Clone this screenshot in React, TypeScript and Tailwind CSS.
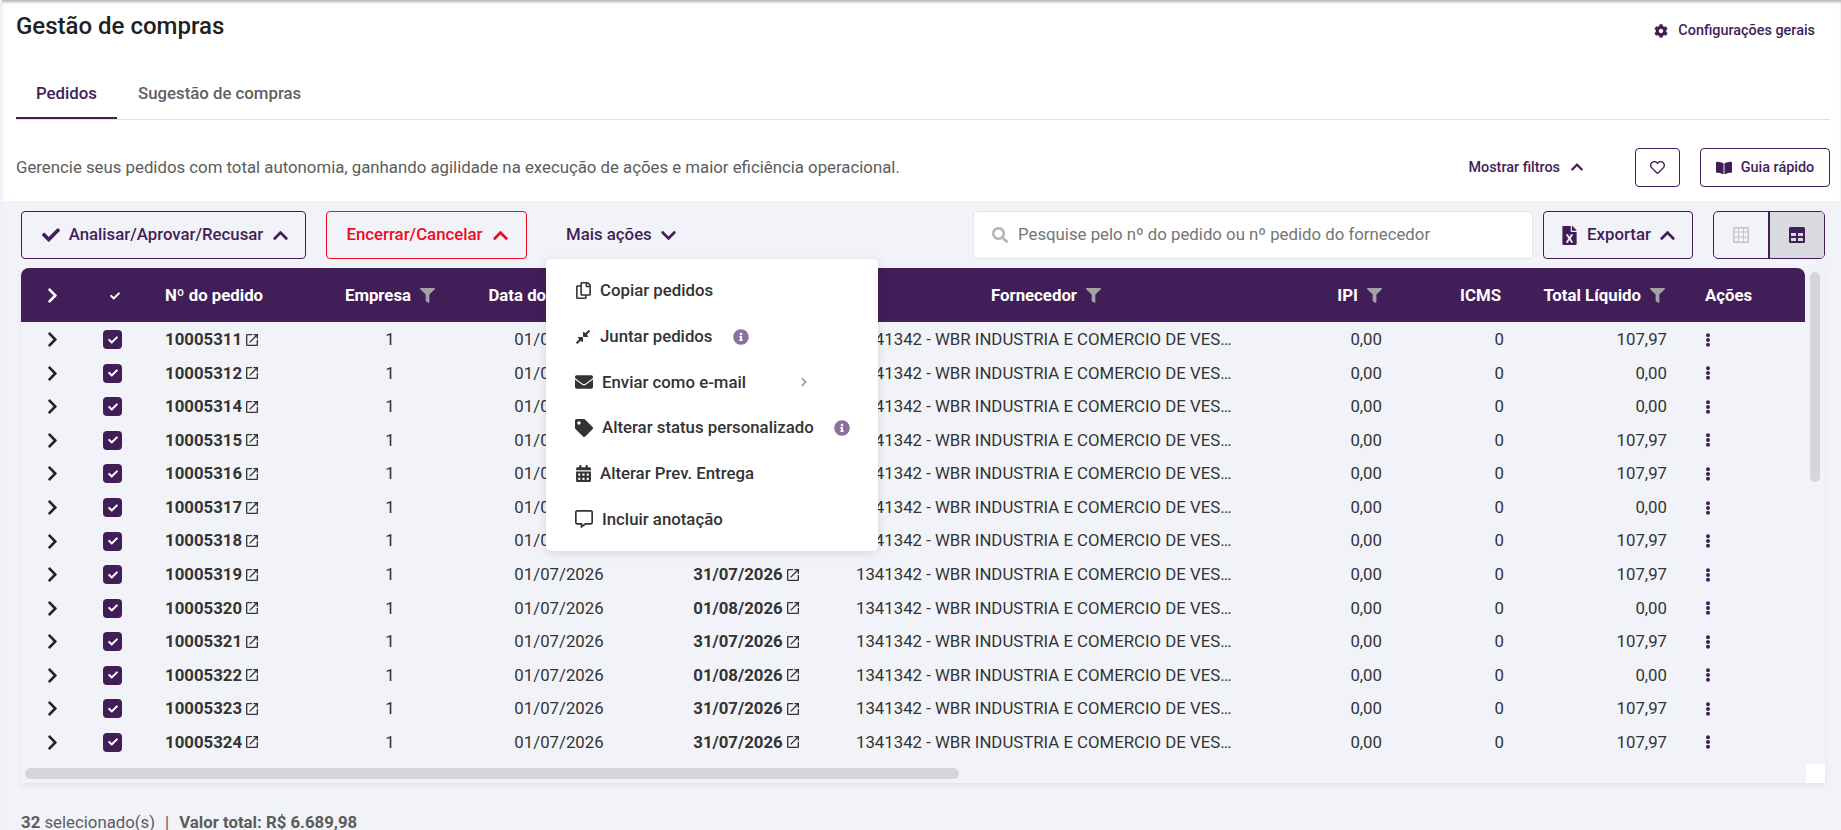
import type { ReactNode } from "react";
import {
  FaBookOpen,
  FaCalendarAlt,
  FaCheck,
  FaChevronDown,
  FaChevronRight,
  FaChevronUp,
  FaCog,
  FaCompressAlt,
  FaEllipsisV,
  FaEnvelope,
  FaFileExcel,
  FaFilter,
  FaInfoCircle,
  FaRegCommentAlt,
  FaRegCopy,
  FaRegHeart,
  FaSearch,
  FaTag,
} from "react-icons/fa";
import { MdOpenInNew } from "react-icons/md";

const rows = [
  { id: "10005311", prev: "31/07/2026", total: "107,97" },
  { id: "10005312", prev: "01/08/2026", total: "0,00" },
  { id: "10005314", prev: "01/08/2026", total: "0,00" },
  { id: "10005315", prev: "31/07/2026", total: "107,97" },
  { id: "10005316", prev: "31/07/2026", total: "107,97" },
  { id: "10005317", prev: "01/08/2026", total: "0,00" },
  { id: "10005318", prev: "31/07/2026", total: "107,97" },
  { id: "10005319", prev: "31/07/2026", total: "107,97" },
  { id: "10005320", prev: "01/08/2026", total: "0,00" },
  { id: "10005321", prev: "31/07/2026", total: "107,97" },
  { id: "10005322", prev: "01/08/2026", total: "0,00" },
  { id: "10005323", prev: "31/07/2026", total: "107,97" },
  { id: "10005324", prev: "31/07/2026", total: "107,97" },
];

const gridCols =
  "grid grid-cols-[62px_58px_159px_180px_158px_218px_380px_146px_122px_163px_138px] items-center";

const GridIcon = ({ header, className }: { header?: boolean; className: string }) => (
  <svg viewBox="0 0 16 16" className={className} fill="currentColor">
    {header ? (
      <path
        fillRule="evenodd"
        d="M1.5 0h13A1.5 1.5 0 0 1 16 1.5v13a1.5 1.5 0 0 1-1.500 1.500h-13A1.500 1.500 0 0 1 0 14.500v-13A1.500 1.500 0 0 1 1.500 0ZM2 6v3h5V6H2Zm7 0v3h5V6H9Zm-7 5v3h5v-3H2Zm7 0v3h5v-3H9Z"
      />
    ) : (
      <path
        fillRule="evenodd"
        d="M1.500 0h13A1.500 1.500 0 0 1 16 1.500v13a1.500 1.500 0 0 1-1.500 1.500h-13A1.500 1.500 0 0 1 0 14.500v-13A1.500 1.500 0 0 1 1.500 0ZM1.500 1.500v3h3.500v-3H1.500Zm4.500 0v3h4v-3H6Zm5 0v3h3.500v-3H11Zm-9.500 4v4h3.500v-4H1.500Zm4.500 0v4h4v-4H6Zm5 0v4h3.500v-4H11Zm-9.500 5v4h3.500v-4H1.500Zm4.500 0v4h4v-4H6Zm5 0v4h3.500v-4H11Z"
      />
    )}
  </svg>
);

const HeaderCell = ({ label, filter, className }: { label: string; filter?: boolean; className: string }) => (
  <div className={`flex items-center gap-[9px] text-[16.8px] font-bold text-white ${className}`}>
    <span>{label}</span>
    {filter && <FaFilter className="size-[15px] text-[#a3a3a3]" />}
  </div>
);

const MenuItem = ({ icon, label, iconWidth, trailing }: { icon: ReactNode; label: string; iconWidth: string; trailing?: ReactNode }) => (
  <div className="flex h-[45.7px] items-center text-[16.8px] font-medium text-[#333333]">
    <span className={`flex shrink-0 items-center ${iconWidth}`}>{icon}</span>
    <span>{label}</span>
    {trailing}
  </div>
);

const Info = () => <FaInfoCircle className="ml-[20px] size-[16px] text-[#8b6f9e]" />;

export default function App() {
  return (
    <div className="relative h-[830px] w-[1841px] overflow-hidden bg-[#eef1f6] pl-[2px] font-['Roboto',sans-serif]">
      <div className="bg-white pl-[14px] pr-[11px] shadow-[inset_0_3px_3px_-1px_rgba(0,0,0,0.3)]">
        <div className="flex h-[60px] items-start justify-between pr-[15px]">
          <h1 className="mt-[10px] text-[24px] font-medium leading-[32px] text-[#212121]">Gestão de compras</h1>
          <button className="mt-[21px] flex h-[20px] items-center gap-[10px] text-[14.4px] font-medium text-[#421e58]">
            <FaCog className="size-[14px]" />
            Configurações gerais
          </button>
        </div>

        <div className="flex h-[60px] border-b border-[#e2e2e2]">
          <div className="h-[59px] w-[101px] border-b-2 border-[#421e58] pt-[21px] text-center text-[16.8px] font-medium leading-[24px] text-[#421e58]">
            Pedidos
          </div>
          <div className="ml-[21px] pt-[21px] text-[16.8px] font-medium leading-[24px] text-[#5f5f5f]">Sugestão de compras</div>
        </div>

        <div className="flex items-center pb-[14px] pt-[28px]">
          <p className="text-[16.8px] text-[#5c5c5c]">
            Gerencie seus pedidos com total autonomia, ganhando agilidade na execução de ações e maior eficiência operacional.
          </p>
          <button className="ml-auto flex items-center gap-[10px] text-[14.4px] font-medium text-[#421e58]">
            Mostrar filtros
            <FaChevronUp className="size-[14px]" />
          </button>
          <button className="ml-[51px] flex h-[39px] w-[45px] items-center justify-center rounded-[4px] border border-[#421e58] text-[#421e58]">
            <FaRegHeart className="size-[15px]" />
          </button>
          <button className="ml-[20px] flex h-[39px] w-[130px] items-center justify-center gap-[9px] rounded-[4px] border border-[#421e58] text-[14.4px] font-medium text-[#421e58]">
            <FaBookOpen className="size-[16px]" />
            Guia rápido
          </button>
        </div>
      </div>

      <div className="bg-[#f2f3f8] pb-[20px] pl-[19px] pr-[16px] pt-[10px]">
        <div className="flex h-[48px] items-stretch">
          <button className="flex w-[285px] items-center justify-center gap-[9px] rounded-[4px] border border-[#421e58] pl-[4px] text-[16.8px] font-medium text-[#421e58]">
            <FaCheck className="size-[18px]" />
            Analisar/Aprovar/Recusar
            <FaChevronUp className="size-[17px]" />
          </button>
          <button className="ml-[20px] flex w-[201px] items-center justify-center gap-[9px] rounded-[4px] border border-[#f00a1c] pl-[2px] text-[16.8px] font-medium text-[#f00a1c]">
            Encerrar/Cancelar
            <FaChevronUp className="size-[17px]" />
          </button>
          <button className="ml-[39px] flex items-center gap-[8px] text-[16.8px] font-medium text-[#421e58]">
            Mais ações
            <FaChevronDown className="size-[17px]" />
          </button>
          <div className="ml-auto flex w-[560px] items-center rounded-[4px] border border-[#e5e6ea] bg-white pl-[18px]">
            <FaSearch className="size-[16px] shrink-0 text-[#b5b5b5]" />
            <input
              className="ml-[10px] w-full bg-transparent text-[16.8px] outline-none placeholder:text-[#757575]"
              placeholder="Pesquise pelo nº do pedido ou nº pedido do fornecedor"
            />
          </div>
          <button className="ml-[10px] flex w-[150px] items-center justify-center gap-[8px] rounded-[4px] border border-[#421e58] text-[16.8px] font-medium text-[#421e58]">
            <FaFileExcel className="size-[19px]" />
            Exportar
            <FaChevronUp className="size-[17px]" />
          </button>
          <div className="ml-[20px] flex w-[112px] overflow-hidden rounded-[5px] border border-[#421e58]">
            <div className="flex flex-1 items-center justify-center border-r-2 border-[#421e58]">
              <GridIcon className="size-[16px] text-[#c4c4c4]" />
            </div>
            <div className="flex flex-1 items-center justify-center bg-[#d9dade]">
              <GridIcon header className="size-[16px] text-[#421e58]" />
            </div>
          </div>
        </div>

        <div className="relative mt-[9px] flex h-[515px] shadow-[0_3px_6px_rgba(0,0,0,0.06)]">
          <div className="flex w-[1784px] flex-col">
            <div className={`${gridCols} h-[54px] shrink-0 rounded-t-[8px] bg-[#421e58] pt-[1px]`}>
              <FaChevronRight className="ml-[23px] size-[17px] text-white" />
              <FaCheck className="ml-[27px] size-[10px] text-white" />
              <HeaderCell label="Nº do pedido" className="pl-[24px]" />
              <HeaderCell label="Empresa" filter className="justify-center" />
              <HeaderCell label="Data do pedido" filter className="justify-center pr-[4px]" />
              <HeaderCell label="Prev. Entrega" filter className="justify-center" />
              <HeaderCell label="Fornecedor" filter className="justify-center" />
              <HeaderCell label="IPI" filter className="justify-end" />
              <HeaderCell label="ICMS" className="justify-end pr-[3px]" />
              <HeaderCell label="Total Líquido" filter className="justify-end pr-[2px]" />
              <HeaderCell label="Ações" className="pl-[38px]" />
            </div>

            <div className="flex-1 overflow-hidden pt-[1px]">
              {rows.map((row) => (
                <div key={row.id} className={`${gridCols} h-[33.55px] text-[16.8px] text-[#333333]`}>
                  <FaChevronRight className="ml-[23px] size-[17px] text-[#222222]" />
                  <span className="ml-[20px] flex size-[19px] items-center justify-center rounded-[4px] bg-[#421e58]">
                    <FaCheck className="size-[10px] text-white" />
                  </span>
                  <div className="flex items-center gap-[2px] pl-[24px] font-bold">
                    {row.id}
                    <MdOpenInNew className="size-[16px]" />
                  </div>
                  <div className="text-center">1</div>
                  <div className="text-center">01/07/2026</div>
                  <div className="flex items-center justify-center gap-[2px] font-bold">
                    {row.prev}
                    <MdOpenInNew className="size-[16px]" />
                  </div>
                  <div className="w-[377px] truncate">1341342 - WBR INDUSTRIA E COMERCIO DE VESTUARIO LTDA</div>
                  <div className="text-right">0,00</div>
                  <div className="text-right">0</div>
                  <div className="text-right">{row.total}</div>
                  <FaEllipsisV className="ml-[34px] size-[14px] text-[#421e58]" />
                </div>
              ))}
            </div>
          </div>

          <div className="absolute left-[4px] top-[500px] h-[11px] w-[934px] rounded-full bg-[#d5d6d9]" />
          <div className="ml-[5px] mt-[4px] h-[210px] w-[10px] rounded-full bg-[#d5d6d9]" />
          <div className="absolute bottom-0 right-0 size-[19px] bg-white" />
        </div>

        <p className="mt-[29px] flex text-[16.8px] leading-[20px] text-[#5c5c5c]">
          <span>
            <b className="font-bold">32</b> selecionado(s)
          </span>
          <span className="mx-[10px]">|</span>
          <b className="font-bold">Valor total: R$ 6.689,98</b>
        </p>
      </div>

      <div className="absolute left-[546px] top-[259px] h-[292px] w-[332px] rounded-[5px] bg-white pl-[29px] pt-[9px] shadow-[0_2px_10px_rgba(0,0,0,0.12)]">
        <MenuItem icon={<FaRegCopy className="size-[17px]" />} iconWidth="w-[25px]" label="Copiar pedidos" />
        <MenuItem icon={<FaCompressAlt className="size-[16px]" />} iconWidth="w-[25px]" label="Juntar pedidos" trailing={<Info />} />
        <MenuItem
          icon={<FaEnvelope className="size-[18px]" />}
          iconWidth="w-[27px]"
          label="Enviar como e-mail"
          trailing={<FaChevronRight className="ml-[53px] size-[10px] text-[#9a9a9a]" />}
        />
        <MenuItem icon={<FaTag className="size-[18px]" />} iconWidth="w-[27px]" label="Alterar status personalizado" trailing={<Info />} />
        <MenuItem icon={<FaCalendarAlt className="size-[17px]" />} iconWidth="w-[25px]" label="Alterar Prev. Entrega" />
        <MenuItem icon={<FaRegCommentAlt className="size-[18px]" />} iconWidth="w-[27px]" label="Incluir anotação" />
      </div>
    </div>
  );
}
